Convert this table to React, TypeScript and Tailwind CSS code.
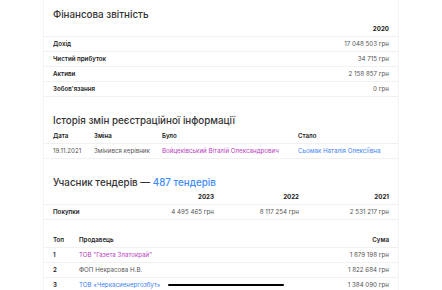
const rowCls = "flex items-center h-[15px] px-[9px] border-b border-[#f1f1f1]";

const finRows = [
  { label: "Дохід", value: "17 048 503 грн" },
  { label: "Чистий прибуток", value: "34 715 грн" },
  { label: "Активи", value: "2 158 857 грн" },
  { label: "Зобов'язання", value: "0 грн" },
];

const sellers = [
  { n: "1", name: 'ТОВ "Газета Златокрай"', color: "text-[#b83cbd]", sum: "1 879 198 грн" },
  { n: "2", name: "ФОП Некрасова Н.В.", color: "text-[#555]", sum: "1 822 684 грн" },
  { n: "3", name: "ТОВ «Черкасиенергозбут»", color: "text-[#3b82f6]", sum: "1 384 090 грн", bar: true },
];

export default function App() {
  return (
    <div className="w-[442px] h-[290px] overflow-hidden bg-white font-['Inter','Noto_Sans',sans-serif]">
      <div className="mx-[43px] w-[356px] border-x border-[#f4f4f4] text-[6.2px] text-[#222]">
        {/* Фінансова звітність */}
        <h2 className="pt-[8px] px-[9px] text-[9.8px] leading-[14px] font-medium text-[#333]">Фінансова звітність</h2>
        <div className={rowCls}>
          <span className="flex-1" />
          <span className="font-bold">2020</span>
        </div>
        {finRows.map((r) => (
          <div key={r.label} className={rowCls}>
            <span className="flex-1 font-semibold">{r.label}</span>
            <span className="text-[#555]">{r.value}</span>
          </div>
        ))}

        {/* Історія змін */}
        <h2 className="pt-[17px] px-[9px] text-[9.8px] leading-[14px] font-medium text-[#333]">
          Історія змін реєстраційної інформації
        </h2>
        <div className={rowCls + " h-[16px] font-semibold"}>
          <span className="w-[41px]">Дата</span>
          <span className="w-[68px]">Зміна</span>
          <span className="w-[136px]">Було</span>
          <span>Стало</span>
        </div>
        <div className={rowCls + " h-[14px] text-[#555]"}>
          <span className="w-[41px]">19.11.2021</span>
          <span className="w-[68px]">Змінився керівник</span>
          <span className="w-[136px] text-[#b83cbd]">Войцеківський Віталій Олександрович</span>
          <span className="text-[#3b82f6]">Сьомак Наталія Олексіївна</span>
        </div>

        {/* Тендери */}
        <h2 className="pt-[17px] px-[9px] text-[9.8px] leading-[14px] font-medium text-[#333]">
          Учасник тендерів — <span className="text-[#3d8bfd]">487 тендерів</span>
        </h2>
        <div className={rowCls + " font-bold"}>
          <span className="flex-1" />
          <span className="w-[80px] text-right">2023</span>
          <span className="w-[85px] text-right">2022</span>
          <span className="w-[90px] text-right">2021</span>
        </div>
        <div className={rowCls}>
          <span className="flex-1 font-semibold">Покупки</span>
          <span className="w-[80px] text-right text-[#555]">4 495 465 грн</span>
          <span className="w-[85px] text-right text-[#555]">8 117 254 грн</span>
          <span className="w-[90px] text-right text-[#555]">2 531 217 грн</span>
        </div>

        <div className={rowCls + " mt-[13px] font-semibold"}>
          <span className="w-[26px]">Топ</span>
          <span className="flex-1">Продавець</span>
          <span>Сума</span>
        </div>
        {sellers.map((s) => (
          <div key={s.n} className={rowCls}>
            <span className="w-[26px] font-semibold">{s.n}</span>
            <span className="flex-1 flex items-center">
              <span className={s.color}>{s.name}</span>
              {s.bar && <span className="ml-[8px] w-[116px] h-[2px] rounded-full bg-black" />}
            </span>
            <span className="text-[#555]">{s.sum}</span>
          </div>
        ))}
      </div>
    </div>
  );
}
